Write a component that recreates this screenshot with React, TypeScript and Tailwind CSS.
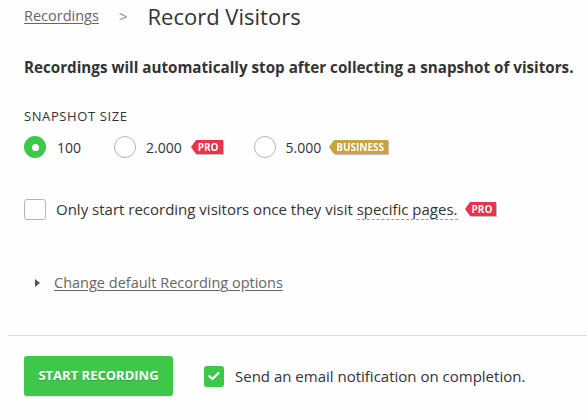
import React from "react";

function Badge({ label, color, className = "" }: { label: string; color: "red" | "gold"; className?: string }) {
  const bg = color === "red" ? "bg-[#e8354b]" : "bg-[#c9a43c]";
  const tri = color === "red" ? "border-r-[#e8354b]" : "border-r-[#c9a43c]";
  return (
    <span className={`inline-flex items-center shrink-0 drop-shadow-[1px_1px_0.5px_rgba(0,0,0,0.25)] ${className}`}>
      <span className={`block w-0 h-0 border-y-[7px] border-y-transparent border-r-[5px] ${tri}`} />
      <span className={`block ${bg} text-white text-[10px] font-bold leading-[14px] h-[14px] pl-[2px] pr-[4px]`}>
        {label}
      </span>
    </span>
  );
}

function Radio({ checked, className = "" }: { checked?: boolean; className?: string }) {
  if (checked) {
    return (
      <span className={`flex w-[22px] h-[22px] rounded-full bg-[#3ec74b] items-center justify-center shrink-0 ${className}`}>
        <span className="block w-[7px] h-[7px] rounded-full bg-white" />
      </span>
    );
  }
  return <span className={`block w-[22px] h-[22px] rounded-full border border-[#b5b5b5] bg-white shrink-0 ${className}`} />;
}

export default function App() {
  return (
    <div
      className="w-[587px] h-[417px] bg-[#fefefe] text-[#333] overflow-hidden"
      style={{ fontFamily: '"Open Sans", "Noto Sans", sans-serif' }}
    >
      <div className="pl-6 flex items-center h-[32px]">
        <span className="text-[14.5px] text-[#666] underline underline-offset-[2px]">Recordings</span>
        <span className="text-[15px] text-[#888] ml-[20px] mr-[20px]">&gt;</span>
        <span className="text-[22px] text-[#333] leading-none">Record Visitors</span>
      </div>

      <div className="pl-6 mt-[25px] text-[15.2px] font-bold text-[#333] leading-[20px] whitespace-nowrap">
        Recordings will automatically stop after collecting a snapshot of visitors.
      </div>

      <div className="pl-6 mt-[31px] text-[13px] tracking-[0.6px] text-[#333] leading-[16px]">SNAPSHOT SIZE</div>

      <div className="pl-6 mt-[11px] flex items-center h-[24px] text-[14px]">
        <Radio checked />
        <span className="ml-[11px]">100</span>
        <Radio className="ml-[33px]" />
        <span className="ml-[10px]">2.000</span>
        <Badge label="PRO" color="red" className="ml-[9px]" />
        <Radio className="ml-[31px]" />
        <span className="ml-[10px]">5.000</span>
        <Badge label="BUSINESS" color="gold" className="ml-[8px]" />
      </div>

      <div className="pl-6 mt-[38px] flex items-center h-[24px] text-[15px]">
        <span className="block w-[22px] h-[21px] rounded-[3px] border border-[#b5b5b5] bg-white shrink-0" />
        <span className="ml-[10px] whitespace-nowrap">
          Only start recording visitors once they visit{" "}
          <span className="border-b border-dashed border-[#999]">specific pages.</span>
        </span>
        <Badge label="PRO" color="red" className="ml-[7px]" />
      </div>

      <div className="pl-[35px] mt-[50px] flex items-center h-[24px] text-[14.5px]">
        <span className="block w-0 h-0 border-y-[4px] border-y-transparent border-l-[5px] border-l-[#555]" />
        <span className="ml-[14px] text-[#666] underline underline-offset-[2px]">Change default Recording options</span>
      </div>

      <div className="ml-2 mt-[40px] border-t border-[#ddd]" />

      <div className="pl-6 mt-[20px] flex items-center">
        <span className="flex w-[149px] h-[40px] rounded-[3px] bg-[#3ec74b] text-white text-[13px] font-bold items-center justify-center shadow-[0_1px_1px_rgba(0,0,0,0.1)] [text-shadow:0_1px_1px_rgba(0,0,0,0.2)]">
          START RECORDING
        </span>
        <span className="flex ml-[31px] w-[20px] h-[21px] rounded-[3px] bg-[#3ec74b] items-center justify-center">
          <svg width="12" height="10" viewBox="0 0 12 10">
            <path d="M1.5 5.2 L4.5 8 L10.5 2" stroke="white" strokeWidth="2.2" fill="none" strokeLinecap="round" strokeLinejoin="round" />
          </svg>
        </span>
        <span className="ml-[11px] text-[15px] text-[#333]">Send an email notification on completion.</span>
      </div>
    </div>
  );
}
